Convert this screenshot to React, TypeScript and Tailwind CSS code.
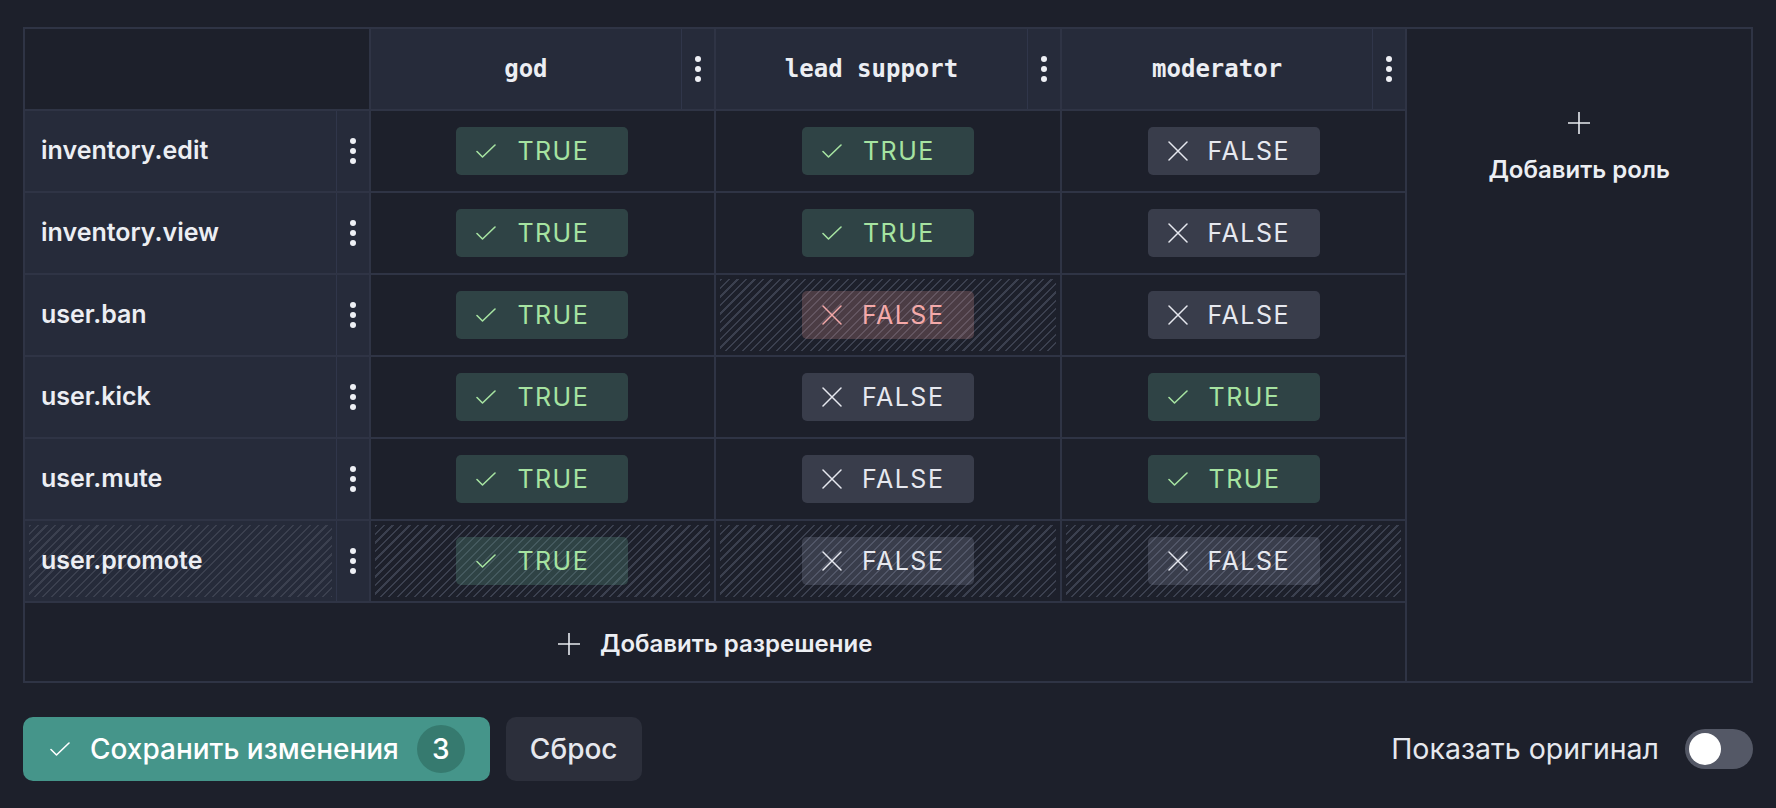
import React from "react";

type Row = { name: string; vals: boolean[]; changed: boolean[]; isNew?: boolean };

const rows: Row[] = [
  { name: "inventory.edit", vals: [true, true, false], changed: [false, false, false] },
  { name: "inventory.view", vals: [true, true, false], changed: [false, false, false] },
  { name: "user.ban", vals: [true, false, false], changed: [false, true, false] },
  { name: "user.kick", vals: [true, false, true], changed: [false, false, false] },
  { name: "user.mute", vals: [true, false, true], changed: [false, false, false] },
  { name: "user.promote", vals: [true, false, false], changed: [true, true, true], isNew: true },
];

const roles = ["god", "lead support", "moderator"];

function CheckIcon({ color }: { color: string }) {
  return (
    <svg width="20" height="14" viewBox="0 0 20 14" fill="none">
      <path d="M1 7.5 L6.5 13 L19 1" stroke={color} strokeWidth="1.6" strokeLinecap="round" strokeLinejoin="round" />
    </svg>
  );
}

function XIcon({ color }: { color: string }) {
  return (
    <svg width="20" height="20" viewBox="0 0 20 20" fill="none">
      <path d="M1 1 L19 19 M19 1 L1 19" stroke={color} strokeWidth="1.5" strokeLinecap="round" />
    </svg>
  );
}

function PlusIcon() {
  return (
    <svg width="22" height="22" viewBox="0 0 22 22" fill="none">
      <path d="M11 0 V22 M0 11 H22" stroke="#e8eaf0" strokeWidth="1.6" />
    </svg>
  );
}

function Kebab() {
  return (
    <svg width="6" height="26" viewBox="0 0 6 26" fill="#eef0f5">
      <circle cx="3" cy="3" r="3" />
      <circle cx="3" cy="13" r="3" />
      <circle cx="3" cy="23" r="3" />
    </svg>
  );
}

function Badge({ value, red }: { value: boolean; red: boolean }) {
  if (value) {
    return (
      <div className="flex h-[48px] w-[172px] items-center gap-[21px] rounded-[5px] bg-[rgba(90,150,130,0.3)] pl-5 text-[25px] leading-none tracking-[1.5px] text-[#a6e3a1]">
        <CheckIcon color="#a6e3a1" />
        <span>TRUE</span>
      </div>
    );
  }
  if (red) {
    return (
      <div className="flex h-[48px] w-[172px] items-center gap-[20px] rounded-[5px] bg-[rgba(240,160,160,0.22)] pl-5 text-[25px] leading-none tracking-[1.5px] text-[#f4a9a9]">
        <XIcon color="#f4a9a9" />
        <span>FALSE</span>
      </div>
    );
  }
  return (
    <div className="flex h-[48px] w-[172px] items-center gap-[20px] rounded-[5px] bg-[rgba(160,166,192,0.22)] pl-5 text-[25px] leading-none tracking-[1.5px] text-[#e6e8ef]">
      <XIcon color="#e6e8ef" />
      <span>FALSE</span>
    </div>
  );
}

export default function App() {
  return (
    <div className="min-h-[808px] w-full bg-[#1d202b] px-[23px] pt-[27px] font-[Inter,'Noto_Sans',sans-serif] text-[#eceef3]">
      <div className="grid grid-cols-5 grid-rows-[80px_repeat(6,80px)_78px] gap-[2px] bg-[#2f3445] p-[2px]">
        {/* header */}
        <div className="bg-[#1d202b]" />
        {roles.map((r) => (
          <div key={r} className="flex bg-[#262b3a]">
            <div className="flex flex-1 items-center justify-center font-['DejaVu_Sans_Mono',monospace] text-[24px] font-bold text-[#eceef3]">
              {r}
            </div>
            <div className="flex w-[33px] items-center justify-center border-l border-[#30364a]">
              <Kebab />
            </div>
          </div>
        ))}
        <div className="col-start-5 row-span-8 row-start-1 flex flex-col items-center gap-[21px] bg-[#1d202b] pt-[83px]">
          <PlusIcon />
          <span className="text-[24px] font-semibold leading-[29px]">Добавить роль</span>
        </div>

        {rows.map((row) => (
          <React.Fragment key={row.name}>
            <div className="flex bg-[#262b3a]">
              {row.isNew ? (
                <div className="flex flex-1 p-1">
                  <div className="flex flex-1 items-center bg-[image:repeating-linear-gradient(135deg,#3b404f_0px,#3b404f_1.5px,transparent_1.5px,transparent_6px)] pl-3 text-[25px] font-semibold">
                    {row.name}
                  </div>
                </div>
              ) : (
                <div className="flex flex-1 items-center pl-4 text-[25px] font-semibold">{row.name}</div>
              )}
              <div className="flex w-[33px] items-center justify-center border-l border-[#30364a]">
                <Kebab />
              </div>
            </div>
            {row.vals.map((v, i) =>
              row.changed[i] ? (
                <div key={i} className="flex bg-[#1d202b] p-1">
                  <div className="flex flex-1 items-center justify-center bg-[image:repeating-linear-gradient(135deg,#3b404f_0px,#3b404f_1.5px,transparent_1.5px,transparent_6px)]">
                    <Badge value={v} red={!row.isNew && !v} />
                  </div>
                </div>
              ) : (
                <div key={i} className="flex items-center justify-center bg-[#1d202b]">
                  <Badge value={v} red={false} />
                </div>
              )
            )}
          </React.Fragment>
        ))}

        <div className="col-span-4 flex items-center justify-center gap-5 bg-[#1d202b] pt-[3px]">
          <PlusIcon />
          <span className="text-[24px] font-semibold">Добавить разрешение</span>
        </div>
      </div>

      <div className="mt-[34px] flex items-center justify-between">
        <div className="flex items-center gap-4">
          <button className="flex h-[64px] items-center rounded-[10px] bg-[#45958a] pl-[27px] pr-[25px] text-[28px] font-medium text-white">
            <CheckIcon color="#ffffff" />
            <span className="ml-[20px]">Сохранить изменения</span>
            <span className="ml-[18px] flex h-[48px] w-[48px] items-center justify-center rounded-full bg-[#367a6f]">3</span>
          </button>
          <button className="flex h-[64px] items-center rounded-[10px] bg-[#2c2f3b] px-6 text-[28px] font-medium text-[#e6e8ee]">
            Сброс
          </button>
        </div>
        <div className="flex items-center gap-[26px]">
          <span className="text-[28.5px] text-[#e6e8ee]">Показать оригинал</span>
          <div className="flex h-[40px] w-[68px] items-center rounded-full bg-[#545866] p-1">
            <div className="h-[32px] w-[32px] rounded-full bg-white" />
          </div>
        </div>
      </div>
    </div>
  );
}
